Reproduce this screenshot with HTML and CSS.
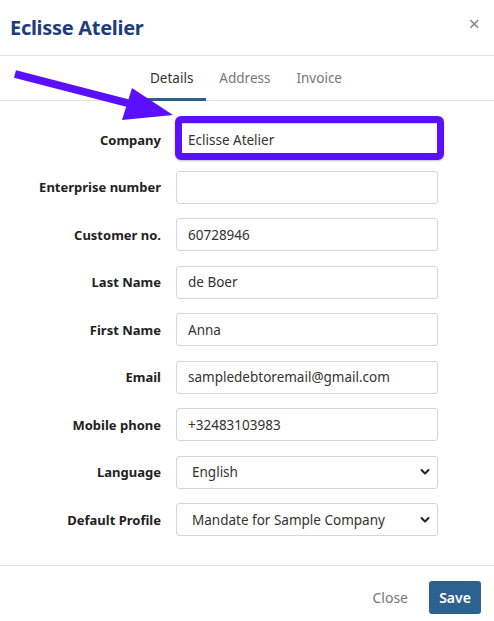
FILE: index.html
```html
<!DOCTYPE html>
<html>
<head>
<meta charset="utf-8">
<link rel="stylesheet" href="styles.css">
</head>
<body>
<div class="modal">
  <header class="modal-header">
    <h1 class="title">Eclisse Atelier</h1>
    <span class="close-x">&times;</span>
  </header>
  <nav class="tabs">
    <span class="tab active">Details</span>
    <span class="tab">Address</span>
    <span class="tab">Invoice</span>
  </nav>
  <form class="form">
    <div class="row">
      <label class="label">Company</label>
      <div class="field highlight-wrap">
        <input class="input" value="Eclisse Atelier">
        <span class="highlight"></span>
      </div>
    </div>
    <div class="row">
      <label class="label">Enterprise number</label>
      <div class="field"><input class="input" value=""></div>
    </div>
    <div class="row">
      <label class="label">Customer no.</label>
      <div class="field"><input class="input" value="60728946"></div>
    </div>
    <div class="row">
      <label class="label">Last Name</label>
      <div class="field"><input class="input" value="de Boer"></div>
    </div>
    <div class="row">
      <label class="label">First Name</label>
      <div class="field"><input class="input" value="Anna"></div>
    </div>
    <div class="row">
      <label class="label">Email</label>
      <div class="field"><input class="input" value="sampledebtoremail@gmail.com"></div>
    </div>
    <div class="row">
      <label class="label">Mobile phone</label>
      <div class="field"><input class="input" value="+32483103983"></div>
    </div>
    <div class="row">
      <label class="label">Language</label>
      <div class="field select">
        <span class="select-text">English</span>
        <svg class="chev" width="10" height="8" viewBox="0 0 10 8"><path d="M1.5 2 L5 5.5 L8.5 2" fill="none" stroke="#222" stroke-width="2" stroke-linecap="round" stroke-linejoin="round"/></svg>
      </div>
    </div>
    <div class="row">
      <label class="label">Default Profile</label>
      <div class="field select">
        <span class="select-text">Mandate for Sample Company</span>
        <svg class="chev" width="10" height="8" viewBox="0 0 10 8"><path d="M1.5 2 L5 5.5 L8.5 2" fill="none" stroke="#222" stroke-width="2" stroke-linecap="round" stroke-linejoin="round"/></svg>
      </div>
    </div>
  </form>
  <footer class="modal-footer">
    <span class="btn-close">Close</span>
    <span class="btn-save">Save</span>
  </footer>
  <svg class="arrow" width="494" height="140" viewBox="0 0 494 140">
    <line x1="15" y1="74" x2="135" y2="105" stroke="#5a0fff" stroke-width="8" stroke-linecap="butt"/>
    <polygon points="132,88 173,115 122,120" fill="#5a0fff"/>
  </svg>
</div>
</body>
</html>
```

FILE: styles.css
```css
html, body {
  margin: 0;
  padding: 0;
  background: #fff;
}
body {
  font-family: "Noto Sans", "Open Sans", sans-serif;
  color: #212529;
}
.modal {
  position: relative;
  width: 494px;
  height: 621px;
  overflow: hidden;
}
.modal-header {
  height: 56px;
  border-bottom: 1px solid #dee2e6;
  display: flex;
  align-items: center;
  justify-content: space-between;
  padding: 0 14px 0 10px;
  box-sizing: border-box;
}
.title {
  margin: 0;
  font-size: 20px;
  font-weight: 700;
  color: #1d3e7a;
  letter-spacing: -0.3px;
  margin-top: -1px;
}
.close-x {
  font-size: 20px;
  color: #888;
  line-height: 1;
  margin-top: -7px;
}
.tabs {
  height: 45px;
  border-bottom: 1px solid #dee2e6;
  display: flex;
  justify-content: center;
  align-items: stretch;
  padding-left: 7px;
  box-sizing: border-box;
}
.tab {
  display: flex;
  align-items: center;
  padding: 0 13px;
  font-size: 13.5px;
  color: #777;
  border-bottom: 3px solid transparent;
  margin-bottom: -1px;
  margin-top: 1px;
}
.tab.active {
  color: #333;
  border-bottom-color: #2b5f8c;
  padding: 0 13px 0 4px;
}
.form {
  padding-top: 22px;
  display: flex;
  flex-direction: column;
  gap: 14.5px;
}
.row {
  display: flex;
  align-items: center;
  height: 33px;
}
.label {
  text-align: right;
  font-size: 13px;
  font-weight: 700;
  color: #222;
  padding-right: 15px;
  box-sizing: border-box;
  width: 176px;
}
.field {
  width: 262px;
  height: 33px;
  position: relative;
}
.input {
  width: 100%;
  height: 33px;
  box-sizing: border-box;
  border: 1px solid #d6d6d6;
  border-radius: 3px;
  padding: 0 11px;
  font-family: inherit;
  font-size: 13.5px;
  color: #333;
  outline: none;
  background: #fff;
}
.highlight {
  position: absolute;
  left: -1px;
  top: -7px;
  right: -6px;
  bottom: -4px;
  border: 7px solid #5a0fff;
  border-radius: 6px;
  box-shadow: 0 1px 2px rgba(0,0,0,0.25);
  pointer-events: none;
}
.select {
  box-sizing: border-box;
  border: 1px solid #d6d6d6;
  border-radius: 3px;
  display: flex;
  align-items: center;
  justify-content: space-between;
  padding: 0 7px 0 15px;
  font-size: 13.5px;
  color: #333;
}
.chev {
  display: block;
}
.modal-footer {
  position: absolute;
  left: 0;
  right: 0;
  top: 565px;
  height: 56px;
  border-top: 1px solid #dee2e6;
  display: flex;
  justify-content: flex-end;
  align-items: center;
  padding-right: 13px;
  gap: 21px;
  box-sizing: border-box;
  padding-top: 8px;
}
.btn-close {
  font-size: 14px;
  color: #777;
}
.btn-save {
  background: #2d6190;
  color: #fff;
  font-size: 14px;
  font-weight: 600;
  border-radius: 3px;
  width: 52px;
  height: 33px;
  display: flex;
  align-items: center;
  justify-content: center;
}
.arrow {
  position: absolute;
  left: 0;
  top: 0;
  pointer-events: none;
}
```
